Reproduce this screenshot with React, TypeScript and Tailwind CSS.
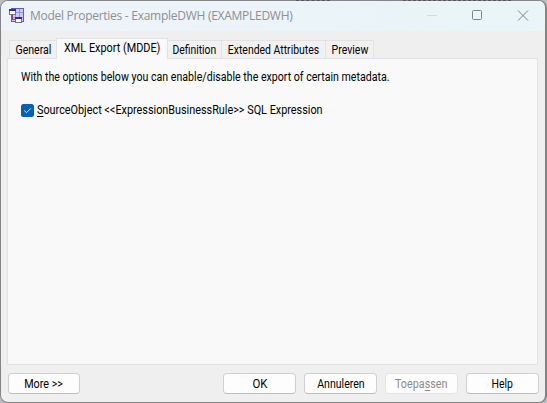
import React from "react";

function AppIcon() {
  return (
    <svg width="16" height="16" viewBox="0 0 16 16" shapeRendering="crispEdges" className="shrink-0">
      <rect x="2" y="0" width="13" height="14" fill="#c6cbf6" />
      <path d="M6.5 0v14M10.5 0v14M2 4.5h13M2 9.5h13" fill="none" stroke="#9a94dc" />
      <path d="M2.5 .5h12v13h-12z" fill="none" stroke="#6558c4" />
      <path d="M3.5 7v4h3" fill="none" stroke="#8b3fa0" />
      <rect x="0.5" y="2.5" width="6" height="4" fill="#fff" stroke="#77706a" />
      <rect x="0" y="1" width="7" height="2" fill="#3b22b4" />
      <rect x="6.5" y="10.5" width="6" height="4" fill="#fff" stroke="#77706a" />
      <rect x="6" y="9" width="7" height="2" fill="#3b22b4" />
    </svg>
  );
}

function Tab({ label, className, text }: { label: string; className: string; text: string }) {
  return (
    <div className={`flex shrink-0 justify-center whitespace-nowrap border-t border-r border-[#e2e2e2] ${className}`}>
      <span className={`leading-[15px] ${text}`}>{label}</span>
    </div>
  );
}

function Button({ children, className = "", text }: { children: React.ReactNode; className?: string; text: string }) {
  return (
    <button className={`flex h-[21px] shrink-0 items-center justify-center whitespace-nowrap rounded-[4px] border border-[#d0d0d0] border-b-[#bcbcbc] bg-[#fdfdfd] pt-px leading-[18px] ${className}`}>
      <span className={text}>{children}</span>
    </button>
  );
}

export default function App() {
  return (
    <div className="relative h-[403px] w-[547px] overflow-hidden bg-[#bdbdc1] font-['Roboto',sans-serif] text-[12px] text-black">
      <div className="flex h-[403px] w-[547px] flex-col overflow-hidden rounded-[8px] border border-r-2 border-[#858585] bg-[#efefef]">
        <header className="flex h-[30px] shrink-0 items-center bg-linear-to-r from-[#eef3fa] to-[#e9f5f7] pl-2">
          <AppIcon />
          <span className="ml-[5px] whitespace-nowrap font-['Open_Sans',sans-serif] text-[12px] leading-[16px] tracking-[-0.27px] text-[#8d9092]">
            Model Properties - ExampleDWH (EXAMPLEDWH)
          </span>
          <svg width="110" height="20" viewBox="0 0 110 20" fill="none" className="ml-auto mr-[9px] shrink-0">
            <path d="M1 9.5h10" stroke="#d2dcde" />
            <rect x="46.5" y="4.5" width="9" height="9" rx="1" stroke="#7e8688" />
            <path d="M92 4.5l10 10M102 4.5l-10 10" stroke="#7e8688" />
          </svg>
        </header>

        <main className="flex flex-1 flex-col pl-[6px] pr-[7px] pt-[7px]">
          <nav className="flex h-5 items-end pl-[2px]">
            <Tab label="General" className="h-[18px] w-[47px] border-l border-r-0 bg-[#f1f1f1] pt-[2px]" text="scale-x-[0.88]" />
            <Tab label="XML Export (MDDE)" className="relative -mb-px h-[21px] w-[112px] border-l bg-[#f9f9f9] pt-[2px]" text="scale-x-[0.905]" />
            <Tab label="Definition" className="h-[18px] w-[54px] bg-[#f1f1f1] pt-[2px]" text="scale-x-[0.86]" />
            <Tab label="Extended Attributes" className="h-[18px] w-[104px] bg-[#f1f1f1] pt-[2px]" text="scale-x-[0.87]" />
            <Tab label="Preview" className="h-[18px] w-[48px] bg-[#f1f1f1] pt-[2px]" text="scale-x-[0.88]" />
          </nav>
          <section className="h-[307px] border border-[#e2e2e2] bg-[#f9f9f9] pl-[13px] pt-[11px]">
            <p className="origin-left scale-x-[0.885] whitespace-nowrap leading-[15px]">
              With the options below you can enable/disable the export of certain metadata.
            </p>
            <label className="mt-[17px] flex items-center">
              <svg width="13" height="13" viewBox="0 0 13 13" className="shrink-0">
                <rect width="13" height="13" rx="2.5" fill="#0560b8" />
                <path d="M3.3 6.5l2.2 2.2L9.8 4.4" fill="none" stroke="#d8ebff" />
              </svg>
              <span className="ml-[3px] origin-left scale-x-[0.903] whitespace-nowrap pt-px leading-[15px]">
                <span className="underline underline-offset-2">S</span>ourceObject &lt;&lt;ExpressionBusinessRule&gt;&gt; SQL Expression
              </span>
            </label>
          </section>
          <footer className="-mr-px mt-2 flex pl-[1px]">
            <Button className="w-[72px]" text="scale-x-[0.9]">More &gt;&gt;</Button>
            <Button className="ml-auto w-[73px]" text="scale-x-[0.95]">OK</Button>
            <Button className="ml-2 w-[73px]" text="scale-x-[0.88]">Annuleren</Button>
            <Button className="ml-2 w-[73px] border-[#e3e3e3] border-b-[#e3e3e3] bg-[#f5f5f5] text-[#8b8b8b]" text="scale-x-[0.9]">
              Toepa<span className="underline underline-offset-2">s</span>sen
            </Button>
            <Button className="ml-2 w-[73px]" text="scale-x-[0.87]">Help</Button>
          </footer>
        </main>
      </div>
      <div className="absolute left-[296px] top-0 w-[34px] border-t border-dashed border-[#55555c]" />
      <div className="absolute left-[403px] top-0 w-[108px] border-t border-dashed border-[#55555c]" />
    </div>
  );
}
